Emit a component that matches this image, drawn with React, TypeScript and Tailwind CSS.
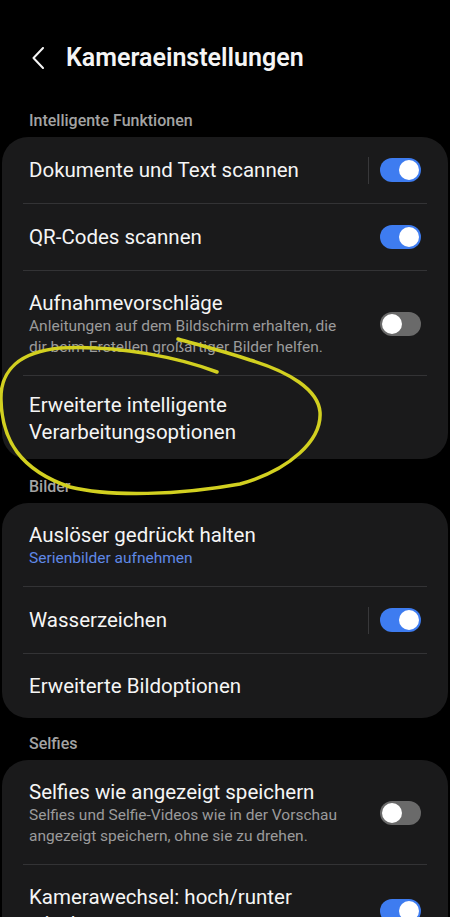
import React from "react";

function Toggle({ on }: { on: boolean }) {
  return (
    <div
      className={
        on
          ? "flex h-[24px] w-[41px] shrink-0 items-center justify-end rounded-full bg-[#3e7cf0] px-[2px]"
          : "flex h-[24px] w-[41px] shrink-0 items-center justify-start rounded-full bg-[#6a6a6a] px-[2px]"
      }
    >
      <div className="h-[20px] w-[20px] rounded-full bg-white" />
    </div>
  );
}

function Divider() {
  return <div className="mx-[21px] h-px bg-[#333335]" />;
}

function SectionLabel({ children, top }: { children: React.ReactNode; top: string }) {
  return (
    <div className={`${top} mb-[6px] px-[29px] text-[16px] leading-[20px] font-medium text-[#a3a3a3]`}>
      {children}
    </div>
  );
}

export default function App() {
  return (
    <div className="relative min-h-screen overflow-hidden bg-black font-['Roboto',sans-serif] text-[#f5f5f5]">
      {/* Header */}
      <div className="mt-[38px] flex h-[40px] items-center px-[32px]">
        <svg width="12" height="22" viewBox="0 0 12 22" fill="none" className="shrink-0">
          <path d="M11 1 L1.5 11 L11 21" stroke="#f5f5f5" strokeWidth="2" strokeLinecap="round" strokeLinejoin="round" />
        </svg>
        <h1 className="ml-[22px] text-[25px] font-semibold">Kameraeinstellungen</h1>
      </div>

      <SectionLabel top="mt-[33px]">Intelligente Funktionen</SectionLabel>
      <div className="mx-[2px] rounded-[26px] bg-[#1a1a1b]">
        <div className="flex h-[66px] items-center px-[27px]">
          <span className="flex-1 text-[20.5px]">Dokumente und Text scannen</span>
          <div className="mr-[11px] h-[27px] w-px bg-[#38383a]" />
          <Toggle on />
        </div>
        <Divider />
        <div className="flex h-[66px] items-center px-[27px]">
          <span className="flex-1 text-[20.5px]">QR-Codes scannen</span>
          <Toggle on />
        </div>
        <Divider />
        <div className="flex items-center px-[27px] pt-[19px] pb-[17px]">
          <div className="flex-1">
            <div className="text-[20.5px] leading-[26px]">Aufnahmevorschläge</div>
            <div className="text-[15.5px] leading-[21px] text-[#9b9b9b]">
              Anleitungen auf dem Bildschirm erhalten, die
              <br />
              dir beim Erstellen großartiger Bilder helfen.
            </div>
          </div>
          <Toggle on={false} />
        </div>
        <Divider />
        <div className="px-[27px] pt-[16px] pb-[13px] text-[20.5px] leading-[27px]">
          Erweiterte intelligente
          <br />
          Verarbeitungsoptionen
        </div>
      </div>

      <SectionLabel top="mt-[18px]">Bilder</SectionLabel>
      <div className="mx-[2px] rounded-[26px] bg-[#1a1a1b]">
        <div className="px-[27px] pt-[19px] pb-[17px]">
          <div className="text-[20.5px] leading-[26px]">Auslöser gedrückt halten</div>
          <div className="text-[15.5px] leading-[21px] text-[#5f88e6]">Serienbilder aufnehmen</div>
        </div>
        <Divider />
        <div className="flex h-[66px] items-center px-[27px]">
          <span className="flex-1 text-[20.5px]">Wasserzeichen</span>
          <div className="mr-[11px] h-[27px] w-px bg-[#38383a]" />
          <Toggle on />
        </div>
        <Divider />
        <div className="flex h-[64px] items-center px-[27px]">
          <span className="text-[20.5px]">Erweiterte Bildoptionen</span>
        </div>
      </div>

      <SectionLabel top="mt-[16px]">Selfies</SectionLabel>
      <div className="mx-[2px] rounded-[26px] bg-[#1a1a1b]">
        <div className="flex items-center px-[27px] pt-[19px] pb-[17px]">
          <div className="flex-1">
            <div className="text-[20.5px] leading-[26px]">Selfies wie angezeigt speichern</div>
            <div className="text-[15.5px] leading-[21px] text-[#9b9b9b]">
              Selfies und Selfie-Videos wie in der Vorschau
              <br />
              angezeigt speichern, ohne sie zu drehen.
            </div>
          </div>
          <Toggle on={false} />
        </div>
        <Divider />
        <div className="flex items-center px-[27px] pt-[19px] pb-[17px]">
          <div className="flex-1 text-[20.5px] leading-[27px]">
            Kamerawechsel: hoch/runter
            <br />
            wischen
          </div>
          <Toggle on />
        </div>
      </div>

      {/* yellow hand-drawn marker */}
      <svg
        className="pointer-events-none absolute left-0 top-0"
        width="450"
        height="917"
        viewBox="0 0 450 917"
        fill="none"
      >
        <path
          d="M217 372 C180 358 120 345 60 348 C20 352 0 370 1 400 C2 440 20 470 70 487 C110 497 180 495 240 484 C290 470 322 440 320 412 C318 390 290 372 250 360 C220 350 195 344 178 339"
          stroke="#d2d020"
          strokeWidth="3.5"
          strokeLinecap="round"
        />
      </svg>
    </div>
  );
}
